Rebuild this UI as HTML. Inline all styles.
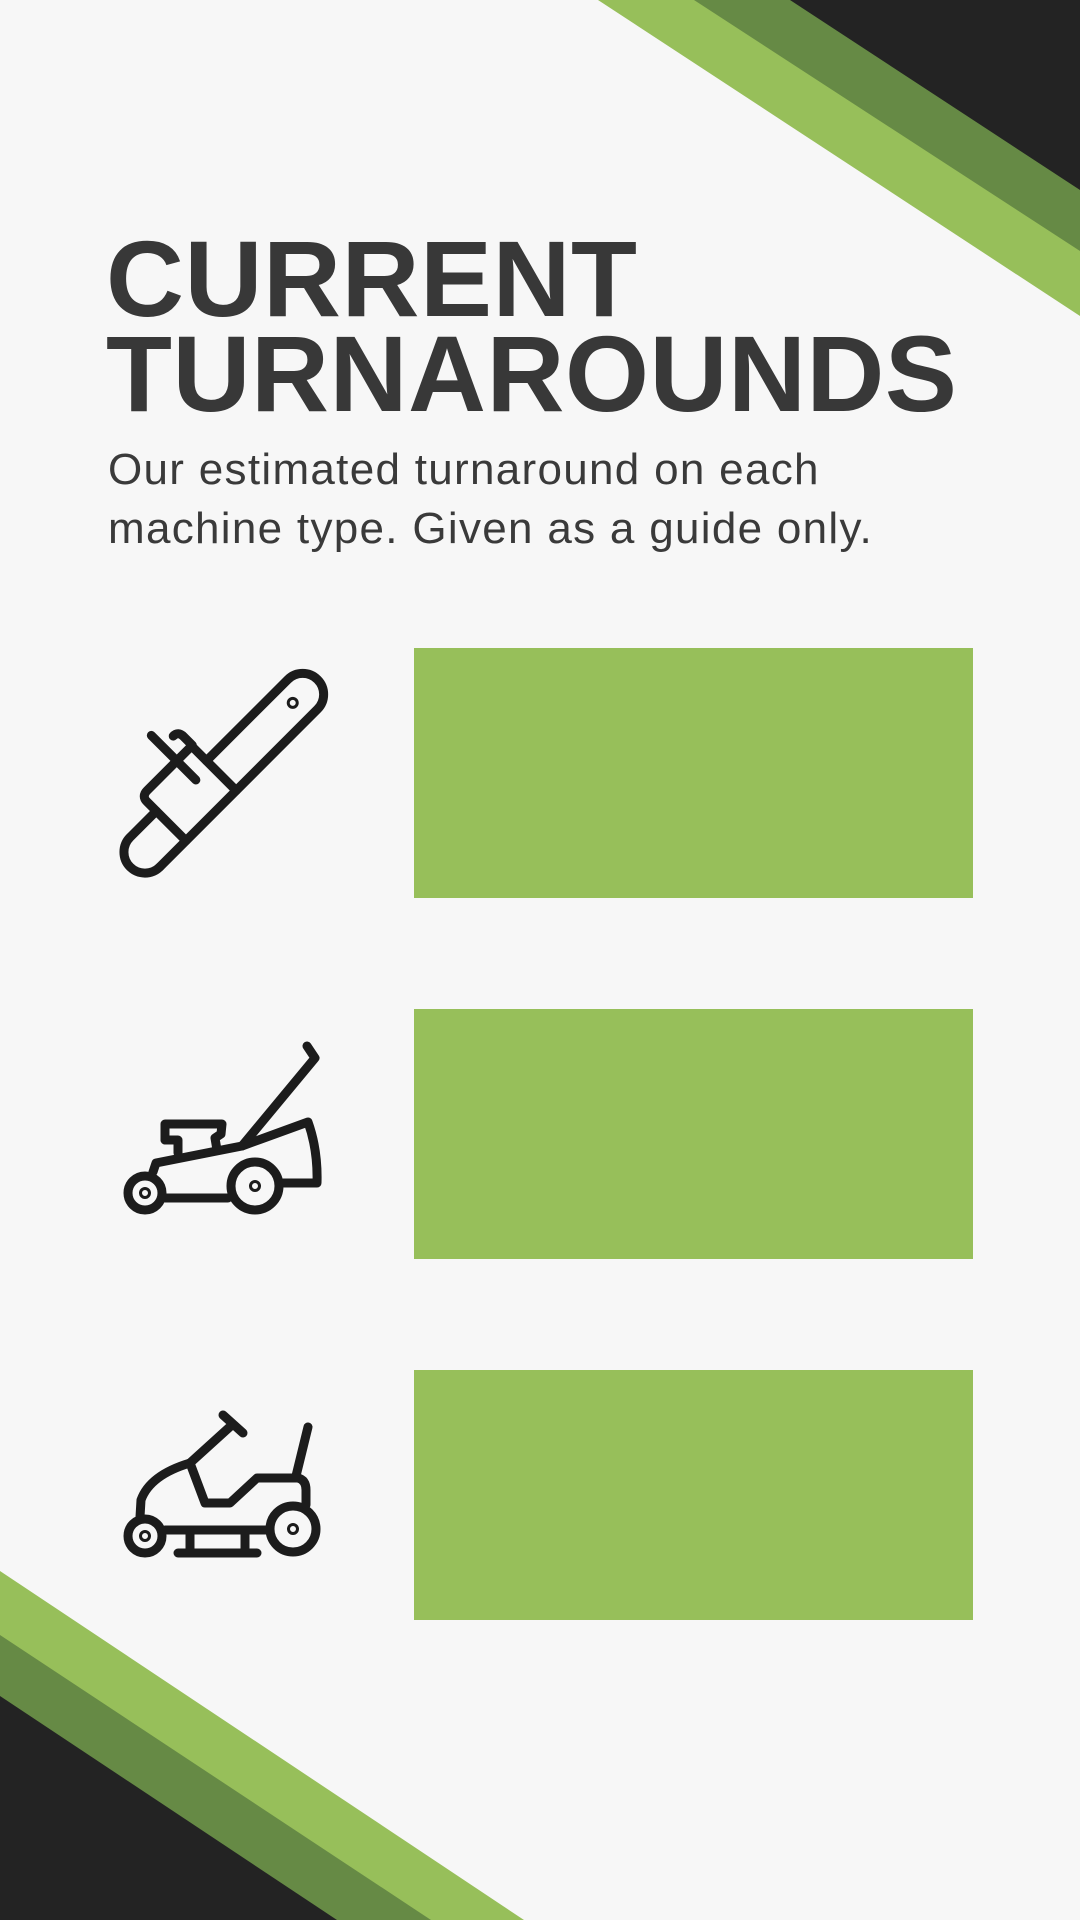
<!DOCTYPE html>
<html><head><meta charset="utf-8"><style>
html,body{margin:0;padding:0}
body{width:1080px;height:1920px;background:#f7f7f7;position:relative;overflow:hidden;font-family:"Liberation Sans",sans-serif;color:#383838}
h1{position:absolute;left:106px;top:231px;margin:0;font-size:108px;line-height:95px;font-weight:bold;letter-spacing:0.5px}
p{position:absolute;left:108px;top:440px;margin:0;font-size:44px;line-height:59px;letter-spacing:1.3px;color:#3a3a3a}
.box{position:absolute;left:414px;width:559px;height:250px;background:#97bf5a}
svg{position:absolute;left:0;top:0}
</style></head><body>
<svg width="1080" height="1920" viewBox="0 0 1080 1920">
<polygon points="598,0 1080,0 1080,316" fill="#97bf5a"/>
<polygon points="694,0 1080,0 1080,251" fill="#668a45"/>
<polygon points="790,0 1080,0 1080,190" fill="#232323"/>
<polygon points="0,1571 524,1920 0,1920" fill="#97bf5a"/>
<polygon points="0,1635 431,1920 0,1920" fill="#668a45"/>
<polygon points="0,1696 337,1920 0,1920" fill="#232323"/>
<g fill="none" stroke="#1c1c1c" stroke-width="9" stroke-linecap="round" stroke-linejoin="round">
<g transform="rotate(-45)">
<path d="M-500 726 L-277 726 A21 21 0 0 0 -277 684 L-392 684"/>
<path d="M-392 726 L-392 663 L-455 663 Q-463 663 -463 671 L-463 726"/>
<path d="M-463 684 L-500 684 A21 21 0 0 0 -500 726"/>
<path d="M-413 627 L-413 690"/>
<path d="M-398 643 Q-391 643 -391 651 L-391 663"/>
<circle cx="-290" cy="704" r="1.5"/>
</g>
<circle cx="145" cy="1193" r="17"/><circle cx="145" cy="1193" r="1.5"/>
<circle cx="255" cy="1186" r="24"/><circle cx="255" cy="1186" r="1.5"/>
<path d="M165 1198 L228 1198"/>
<path d="M153 1172 L156 1163 L242 1146 L308 1122 Q318 1150 317 1183 L283 1183"/>
<path d="M242 1146 L315 1058 L307 1046"/>
<path d="M165 1140 L165 1124 L222 1124 L221 1134 L215 1138 L217 1150"/>
<path d="M165 1140 L178 1140 L178 1153"/>
<circle cx="145" cy="1536" r="17"/><circle cx="145" cy="1536" r="1.5"/>
<circle cx="293" cy="1529" r="23"/><circle cx="293" cy="1529" r="1.5"/>
<path d="M165 1530 L268 1530"/>
<path d="M178 1553 L257 1553 M190 1530 L190 1553 M245 1530 L245 1553"/>
<path d="M223 1415 L243 1433 M233 1424 L190 1463"/>
<path d="M190 1463 Q150 1475 141 1500 L140 1517"/>
<path d="M190 1463 L205 1503 L230 1503 L257 1478 L298 1478 Q306 1480 306 1490 L306 1505"/>
<path d="M296 1476 L308 1427"/>
</g>
</svg>
<h1>CURRENT<br>TURNAROUNDS</h1>
<p>Our estimated turnaround on each<br>machine type. Given as a guide only.</p>
<div class="box" style="top:648px"></div>
<div class="box" style="top:1009px"></div>
<div class="box" style="top:1370px"></div>
</body></html>
